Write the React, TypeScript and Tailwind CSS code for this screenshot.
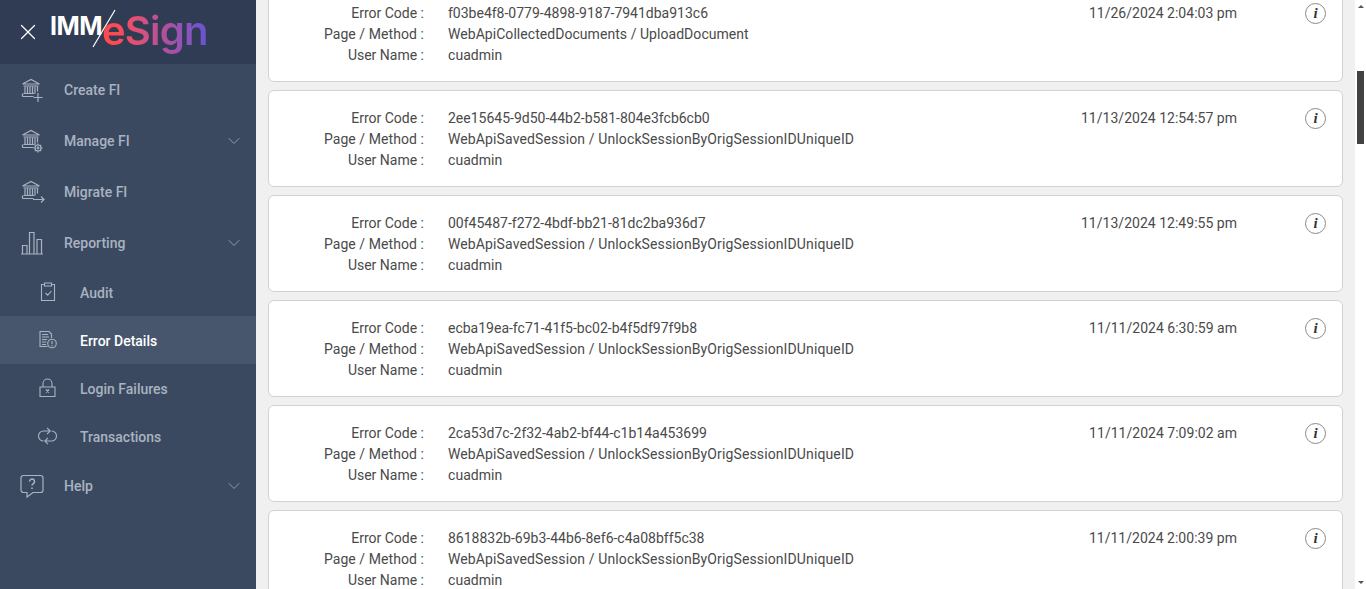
import React from 'react';
import { ChevronDown, X } from 'lucide-react';

const errors = [
  { code: 'f03be4f8-0779-4898-9187-7941dba913c6', method: 'WebApiCollectedDocuments / UploadDocument', date: '11/26/2024 2:04:03 pm', track: 'tracking-[0.05px]' },
  { code: '2ee15645-9d50-44b2-b581-804e3fcb6cb0', method: 'WebApiSavedSession / UnlockSessionByOrigSessionIDUniqueID', date: '11/13/2024 12:54:57 pm', track: 'tracking-[0.12px]' },
  { code: '00f45487-f272-4bdf-bb21-81dc2ba936d7', method: 'WebApiSavedSession / UnlockSessionByOrigSessionIDUniqueID', date: '11/13/2024 12:49:55 pm', track: 'tracking-[0.12px]' },
  { code: 'ecba19ea-fc71-41f5-bc02-b4f5df97f9b8', method: 'WebApiSavedSession / UnlockSessionByOrigSessionIDUniqueID', date: '11/11/2024 6:30:59 am', track: 'tracking-[0.12px]' },
  { code: '2ca53d7c-2f32-4ab2-bf44-c1b14a453699', method: 'WebApiSavedSession / UnlockSessionByOrigSessionIDUniqueID', date: '11/11/2024 7:09:02 am', track: 'tracking-[0.12px]' },
  { code: '8618832b-69b3-44b6-8ef6-c4a08bff5c38', method: 'WebApiSavedSession / UnlockSessionByOrigSessionIDUniqueID', date: '11/11/2024 2:00:39 pm', track: 'tracking-[0.12px]' },
];

function Bank({ children }: { children?: React.ReactNode }) {
  return (
    <svg width="26" height="26" viewBox="0 0 26 26" fill="none" stroke="currentColor" strokeWidth="1.200">
      <path d="M2.500 7 11 2.500 19.500 7M2.500 7h17M3.500 9h15" />
      <path d="M5 9.500v7M7.500 9.500v7M10 9.500v7M12.500 9.500v7M15 9.500v7M17.500 9.500v5" />
      <path d="M3.500 16.500h11M2.500 19.500h11M2.500 19.500v-3" />
      {children}
    </svg>
  );
}

const iconClass = 'text-[#a9b3c1]';

function CreateIcon() {
  return <Bank><path d="M18 16v9M13.500 20.500h9" /></Bank>;
}

function ManageIcon() {
  return (
    <Bank>
      <circle cx="18" cy="20" r="3" />
      <circle cx="18" cy="20" r="0.800" />
      <path d="M18 15.500V17M18 23v1.500M13.500 20H15M21 20h1.500M14.800 16.800l1 1M20.200 22.200l1 1M21.200 16.800l-1 1M15.800 22.200l-1 1" />
    </Bank>
  );
}

function MigrateIcon() {
  return <Bank><path d="M13 20.500h11M21 17.500l3 3-3 3" /></Bank>;
}

function ReportIcon() {
  return (
    <svg width="26" height="26" viewBox="0 0 26 26" fill="none" stroke="currentColor" strokeWidth="1.200">
      <path d="M1 24h22M2.500 24v-8.500h4.500V24M9.500 24V2.500H14V24M17 24V9.500h4.500V24" />
    </svg>
  );
}

function HelpIcon() {
  return (
    <svg width="26" height="26" viewBox="0 0 26 26" fill="none" stroke="currentColor" strokeWidth="1.200">
      <path d="M3.500 2.500h17A2.500 2.500 0 0 1 23 5v12a2.500 2.500 0 0 1-2.500 2.500H13L7 24v-4.500H3.500A2.500 2.500 0 0 1 1 17V5a2.500 2.500 0 0 1 2.500-2.500Z" />
      <path d="M9.500 8.500a2.500 2.500 0 1 1 3.800 2.100c-.9.600-1.300 1-1.300 2" strokeWidth="1.500" />
      <path d="M12 14.500V16" strokeWidth="1.600" />
    </svg>
  );
}

function AuditIcon() {
  return (
    <svg width="20" height="20" viewBox="0 0 20 20" fill="none" stroke="currentColor" strokeWidth="1.100">
      <path d="M6 2.500H3.500v16h13v-16H14M6.500 1h7v3h-7zM7.500 11l2.200 2.200L13.500 9" />
    </svg>
  );
}

function ErrorIcon() {
  return (
    <svg width="20" height="20" viewBox="0 0 20 20" fill="none" stroke="currentColor" strokeWidth="1.100">
      <path d="M9.500 16.500h-7.500v-15h9l2.500 2.500v4M4 4.500h6M4 7h7M4 9.500h5M4 12h4M4 14.500h4" />
      <circle cx="14" cy="13.500" r="4.300" />
      <path d="M14 11v3M14 15v1.200" />
    </svg>
  );
}

function LockIcon() {
  return (
    <svg width="20" height="20" viewBox="0 0 20 20" fill="none" stroke="currentColor" strokeWidth="1.100">
      <path d="M2 9h15v9.500H2zM5 9V5.500a4.500 4.500 0 0 1 9 0V9" />
      <path d="M8 11.500l3 3M11 11.500l-3 3" strokeWidth="1.400" />
    </svg>
  );
}

function SyncIcon() {
  return (
    <svg width="20" height="20" viewBox="0 0 20 20" fill="none" stroke="currentColor" strokeWidth="1.100">
      <path d="M5.500 15a5 5 0 0 1 0-10h6M9 1.800 12.200 5 9 8.200" />
      <path d="M13.500 5a5 5 0 0 1 0 10h-6M10 11.800 6.800 15l3.200 3.200" />
    </svg>
  );
}

function MainItem({ icon, label, arrow }: { icon: React.ReactNode; label: string; arrow?: boolean }) {
  return (
    <div className="flex h-[51px] items-center pr-[12px] pl-[20px] text-sm">
      <div className={`w-[44px] ${iconClass}`}>{icon}</div>
      <span className="flex-1 font-medium text-[#a9b3c1]">{label}</span>
      {arrow && <ChevronDown size={20} strokeWidth={0.900} className="text-[#a9b3c1]" />}
    </div>
  );
}

function SubItem({ icon, label, active }: { icon: React.ReactNode; label: string; active?: boolean }) {
  return (
    <div className={`flex h-[48px] items-center pt-[2px] pl-[38px] text-sm font-medium ${active ? 'bg-[#47566c] text-white' : 'text-[#a9b3c1]'}`}>
      <div className="-mt-[2px] w-[42px] text-[#a9b3c1]">{icon}</div>
      <span>{label}</span>
    </div>
  );
}

function Sidebar() {
  return (
    <aside className="flex h-full w-[256px] shrink-0 flex-col bg-[#3b4960]">
      <div className="flex h-[64px] items-center bg-[#303c53] pl-[15px]">
        <X size={26} strokeWidth={1.200} className="text-white" />
        <div className="relative ml-[9px] flex h-[50px] w-[170px] items-start font-['Inter',sans-serif]">
          <span className="mt-[4px] text-[25px] leading-[30px] font-bold tracking-[-0.5px] text-white">IMM</span>
          <svg className="absolute top-0 left-[40px]" width="26" height="50" viewBox="0 0 26 50" fill="none">
            <path d="M25 3 3 40" stroke="#fff" strokeWidth="1.200" />
          </svg>
          <span className="absolute top-[3px] left-[52px] bg-gradient-to-r from-[#fe4a50] from-15% via-[#b04f9f] via-60% to-[#6e52cf] to-95% bg-clip-text pb-[4px] text-[40px] leading-[42px] font-semibold tracking-[-0.8px] text-transparent">
            eSign
          </span>
        </div>
      </div>
      <div>
        <MainItem icon={<CreateIcon />} label="Create FI" />
        <MainItem icon={<ManageIcon />} label="Manage FI" arrow />
        <MainItem icon={<MigrateIcon />} label="Migrate FI" />
        <MainItem icon={<ReportIcon />} label="Reporting" arrow />
        <SubItem icon={<AuditIcon />} label="Audit" />
        <SubItem icon={<ErrorIcon />} label="Error Details" active />
        <SubItem icon={<LockIcon />} label="Login Failures" />
        <SubItem icon={<SyncIcon />} label="Transactions" />
        <MainItem icon={<HelpIcon />} label="Help" arrow />
      </div>
    </aside>
  );
}

function ErrorCard({ code, method, date, track }: { code: string; method: string; date: string; track: string }) {
  const rows = [
    ['Error Code :', code, ''],
    ['Page / Method :', method, track],
    ['User Name :', 'cuadmin', 'tracking-[0.05px]'],
  ];
  return (
    <div className="flex h-[97px] shrink-0 rounded-md border border-[#d2d2d2] bg-white pt-[17px] text-sm leading-[21px] text-[#4a4a4a]">
      <div className="flex-1">
        {rows.map(([label, value, valueTrack]) => (
          <div key={label} className="flex">
            <span className={`w-[155px] text-right ${label.startsWith('Page') ? 'tracking-[0.07px]' : ''}`}>{label}</span>
            <span className={`ml-[24px] ${valueTrack}`}>{value}</span>
          </div>
        ))}
      </div>
      <span className="mr-[68px] h-[21px] tracking-[0.02px]">{date}</span>
      <div className="mr-[16px] flex h-[21px] w-[21px] items-center justify-center rounded-full border border-[#8a8a8a] font-['Liberation_Serif',serif] text-[15px] font-bold text-[#333] italic">
        i
      </div>
    </div>
  );
}

function Scrollbar() {
  return (
    <div className="flex h-full w-[11px] shrink-0 flex-col items-center bg-white">
      <div className="mt-[5px] h-0 w-0 border-x-[3px] border-b-[3px] border-x-transparent border-b-[#555]" />
      <div className="mt-[63px] h-[73px] w-[7px] bg-[#424242]" />
      <div className="mt-auto mb-[5px] h-0 w-0 border-x-[3px] border-t-[3px] border-x-transparent border-t-[#555]" />
    </div>
  );
}

export default function App() {
  return (
    <div className="flex h-[589px] w-[1366px] overflow-hidden bg-[#f0f0f0] font-['Roboto',sans-serif]">
      <Sidebar />
      <main className="flex min-w-0 flex-1 flex-col gap-[8px] overflow-hidden pt-0 pr-[12px] pl-[12px]">
        <div className="-mt-[15px] flex flex-col gap-[8px]">
          {errors.map((e) => (
            <ErrorCard key={e.code} {...e} />
          ))}
        </div>
      </main>
      <Scrollbar />
    </div>
  );
}
